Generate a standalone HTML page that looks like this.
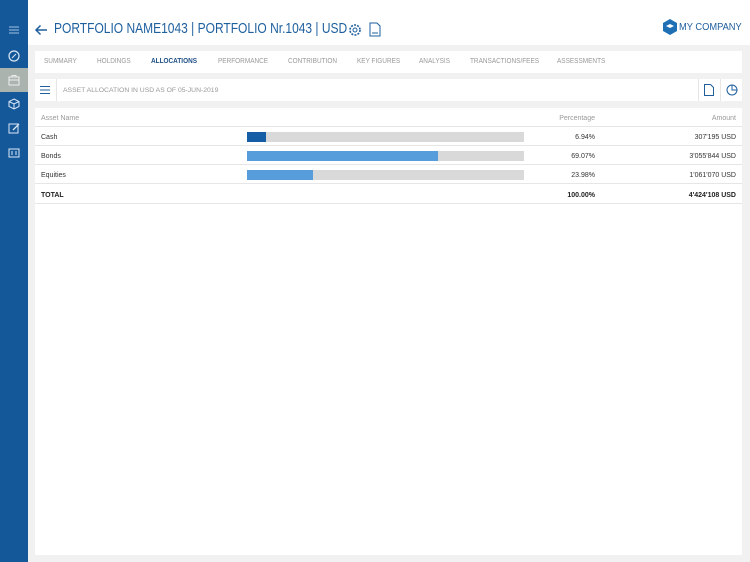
<!DOCTYPE html>
<html><head><meta charset="utf-8"><style>
*{margin:0;padding:0;box-sizing:border-box}
body{width:750px;height:562px;background:#f1f1f1;font-family:"Liberation Sans",sans-serif;position:relative;overflow:hidden}
.side{position:absolute;left:0;top:0;width:28px;height:562px;background:#14589a}
.side .act{position:absolute;top:68px;left:0;width:28px;height:24px;background:#aab3ae}
.ic{position:absolute;left:8px;width:12px;height:12px}
.hdr{position:absolute;left:28px;top:0;width:722px;height:45px;background:#fff}
.title{position:absolute;left:54px;top:20px;font-size:15px;color:#1e5f9e;transform:scaleX(0.8);transform-origin:0 0;white-space:nowrap}
.panel{position:absolute;background:#fff}
.tab{position:absolute;top:58px;font-size:7px;color:#999;transform:scaleX(0.92);transform-origin:0 0;white-space:nowrap}
.row{position:absolute;left:35px;width:707px;height:19px;border-bottom:1px solid #e6e6e6;font-size:7px;color:#333}
.row span{position:absolute;top:7px}
.bar{position:absolute;left:212px;top:5px;width:277px;height:10px;background:#d9d9d9}
.bar i{display:block;height:10px}
</style></head><body>
<div class="side">
<div class="act"></div>
<svg class="ic" style="top:24px" viewBox="0 0 12 12"><path d="M1 3h10M1 6h10M1 9h10" stroke="#9fc0e0" stroke-width="1"/></svg>
<svg class="ic" style="top:50px" viewBox="0 0 12 12"><circle cx="6" cy="6" r="5" fill="none" stroke="#dbe8f5" stroke-width="1.2"/><path d="M4 8l4-4" stroke="#dbe8f5"/></svg>
<svg class="ic" style="top:74px" viewBox="0 0 12 12"><rect x="1" y="3" width="10" height="8" fill="none" stroke="#eee" stroke-width="1"/><path d="M4 3V1.5h4V3M1 6h10" stroke="#eee" fill="none"/></svg>
<svg class="ic" style="top:98px" viewBox="0 0 12 12"><path d="M6 1l5 2.5v5L6 11 1 8.5v-5z M1 3.5L6 6l5-2.5M6 6v5" fill="none" stroke="#dbe8f5"/></svg>
<svg class="ic" style="top:122px" viewBox="0 0 12 12"><rect x="1" y="2" width="9" height="9" fill="none" stroke="#dbe8f5"/><path d="M5 8l6-6" stroke="#dbe8f5" stroke-width="1.3"/></svg>
<svg class="ic" style="top:147px" viewBox="0 0 12 12"><rect x="1" y="2" width="10" height="8" fill="none" stroke="#dbe8f5"/><path d="M3 5h2M3 7h2M7 5h2M7 7h2" stroke="#dbe8f5"/></svg>
</div>
<div class="hdr"></div>
<svg style="position:absolute;left:34px;top:24px" width="14" height="12" viewBox="0 0 14 12"><path d="M13 6H2M6.5 1.5L2 6l4.5 4.5" fill="none" stroke="#1e5f9e" stroke-width="1.5"/></svg>
<div class="title">PORTFOLIO NAME1043 | PORTFOLIO Nr.1043 | USD</div>
<svg style="position:absolute;left:348px;top:23px" width="14" height="14" viewBox="0 0 14 14"><circle cx="7" cy="7" r="2" fill="none" stroke="#1e5f9e"/><circle cx="7" cy="7" r="5" fill="none" stroke="#1e5f9e" stroke-dasharray="2 1.2" stroke-width="1.6"/></svg>
<svg style="position:absolute;left:369px;top:22px" width="12" height="15" viewBox="0 0 12 15"><path d="M1 1h7l3 3v10H1z" fill="none" stroke="#1e5f9e"/><path d="M3 11h6" stroke="#1e5f9e"/></svg>
<svg style="position:absolute;left:662px;top:19px" width="16" height="16" viewBox="0 0 16 16"><path d="M8 0l7 4v8l-7 4-7-4V4z" fill="#1e6fb4"/><path d="M4 7l4-2 4 2-4 2z" fill="#fff"/></svg>
<div style="position:absolute;left:679px;top:22px;font-size:10px;color:#1e5f9e;transform:scaleX(0.93);transform-origin:0 0;white-space:nowrap">MY COMPANY</div>
<div class="panel" style="left:35px;top:51px;width:707px;height:22px"></div>
<div class="tab" style="left:44px">SUMMARY</div>
<div class="tab" style="left:97px">HOLDINGS</div>
<div class="tab" style="left:151px;color:#1e4f85;font-weight:bold">ALLOCATIONS</div>
<div class="tab" style="left:218px">PERFORMANCE</div>
<div class="tab" style="left:288px">CONTRIBUTION</div>
<div class="tab" style="left:357px">KEY FIGURES</div>
<div class="tab" style="left:419px">ANALYSIS</div>
<div class="tab" style="left:470px">TRANSACTIONS/FEES</div>
<div class="tab" style="left:557px">ASSESSMENTS</div>
<div class="panel" style="left:35px;top:79px;width:707px;height:22px"></div>
<div style="position:absolute;left:56px;top:79px;width:1px;height:22px;background:#e6e6e6"></div>
<div style="position:absolute;left:698px;top:79px;width:1px;height:22px;background:#e6e6e6"></div>
<div style="position:absolute;left:720px;top:79px;width:1px;height:22px;background:#e6e6e6"></div>
<svg style="position:absolute;left:40px;top:86px" width="10" height="8" viewBox="0 0 10 8"><path d="M0 .5h10M0 4h10M0 7.5h10" stroke="#1e5f9e"/></svg>
<div style="position:absolute;left:63px;top:87px;font-size:6.8px;color:#999">ASSET ALLOCATION IN USD AS OF 05-JUN-2019</div>
<svg style="position:absolute;left:704px;top:84px" width="10" height="12" viewBox="0 0 10 12"><path d="M.5.5h6l3 3v8H.5z" fill="none" stroke="#1e5f9e"/></svg>
<svg style="position:absolute;left:726px;top:84px" width="12" height="12" viewBox="0 0 12 12"><circle cx="6" cy="6" r="5" fill="none" stroke="#1e5f9e"/><path d="M6 1v5h5" fill="none" stroke="#1e5f9e"/></svg>
<div class="panel" style="left:35px;top:108px;width:707px;height:447px"></div>
<div class="row" style="top:108px"><span style="left:6px;color:#999">Asset Name</span><span style="right:147px;color:#999">Percentage</span><span style="right:6px;color:#999">Amount</span></div>
<div class="row" style="top:127px"><span style="left:6px">Cash</span><div class="bar"><i style="width:19px;background:#155ea6"></i></div><span style="right:147px">6.94%</span><span style="right:6px">307'195 USD</span></div>
<div class="row" style="top:146px"><span style="left:6px">Bonds</span><div class="bar"><i style="width:191px;background:#579cdb"></i></div><span style="right:147px">69.07%</span><span style="right:6px">3'055'844 USD</span></div>
<div class="row" style="top:165px"><span style="left:6px">Equities</span><div class="bar"><i style="width:66px;background:#579cdb"></i></div><span style="right:147px">23.98%</span><span style="right:6px">1'061'070 USD</span></div>
<div class="row" style="top:185px;font-weight:bold;color:#222"><span style="left:6px">TOTAL</span><span style="right:147px">100.00%</span><span style="right:6px">4'424'108 USD</span></div>
</body></html>
